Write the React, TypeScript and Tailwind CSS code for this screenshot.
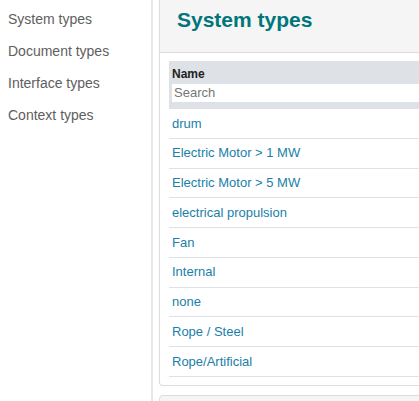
const sideLinks = ["System types", "Document types", "Interface types", "Context types"];

const systemTypes = [
  "drum",
  "Electric Motor > 1 MW",
  "Electric Motor > 5 MW",
  "electrical propulsion",
  "Fan",
  "Internal",
  "none",
  "Rope / Steel",
  "Rope/Artificial",
];

export default function App() {
  return (
    <div
      className="flex w-[419px] h-[401px] overflow-hidden bg-white"
      style={{ fontFamily: '"Liberation Sans", Arial, sans-serif' }}
    >
      {/* side menu */}
      <nav className="w-[153px] shrink-0 border-r-2 border-[#e4e8ed] pt-[9px]">
        {sideLinks.map((label) => (
          <div key={label} className="h-[32px] pl-[8px] text-[14px] leading-[20px] text-[#5e5e5e]">
            {label}
          </div>
        ))}
      </nav>

      {/* main */}
      <main className="flex-1 shrink-0 pl-[6px]">
        <div className="w-[320px] rounded-b-[4px] border border-t-0 border-[#dcdcdc] bg-white">
          <div className="h-[53px] border-b border-[#dcdcdc] bg-[#f5f5f5] pl-[17px] pt-[8px]">
            <h1 className="text-[21px] font-bold leading-[24px] text-[#00767c]">System types</h1>
          </div>
          <div className="px-[9px] pt-[8px] pb-[8px]">
            <div className="h-[48px] bg-[#dee2e6] px-[3px] pt-[6px]">
              <div className="text-[12px] font-bold leading-[15px] text-[#222]">Name</div>
              <input
                className="mt-[2px] block h-[18px] w-full bg-white px-[2px] text-[13px] text-[#333] placeholder:text-[#767676] outline-none"
                placeholder="Search"
              />
            </div>
            {systemTypes.map((name) => (
              <div
                key={name}
                className="flex h-[29.75px] items-center border-b border-[#dee2e6] pl-[3px] text-[13px] text-[#1a80a8]"
              >
                {name}
              </div>
            ))}
          </div>
        </div>
        <div className="mt-[9px] h-[40px] w-[320px] rounded-[4px] border border-[#dcdcdc] bg-[#f5f5f5]" />
      </main>
    </div>
  );
}
